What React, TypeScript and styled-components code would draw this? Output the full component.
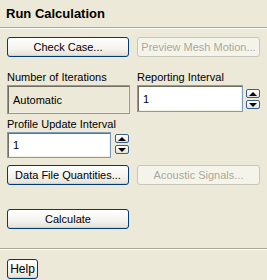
import styled, { createGlobalStyle } from "styled-components";

const GlobalStyle = createGlobalStyle`
  html, body {
    margin: 0;
    padding: 0;
    background: #ece9d8;
  }
  body {
    font-family: "Liberation Sans", Arial, sans-serif;
    font-size: 11px;
    color: #000;
  }
`;

const Panel = styled.div`
  width: 267px;
  height: 280px;
  display: flex;
  flex-direction: column;
  background: #ece9d8;
  overflow: hidden;
`;

const Header = styled.div`
  height: 27px;
  padding: 6px 0 0 6px;
  box-sizing: border-box;
  font-size: 13px;
  font-weight: bold;
  line-height: 16px;
`;

const Rule = styled.div`
  height: 1px;
  background: #aca899;
  border-bottom: 1px solid #fff;
`;

const Body = styled.div`
  flex: 1;
  padding: 8px 7px 0;
  display: flex;
  flex-direction: column;
`;

const Row = styled.div<{ $top?: number }>`
  display: grid;
  grid-template-columns: 122px 123px;
  column-gap: 8px;
  margin-top: ${(p) => p.$top ?? 0}px;
  align-items: start;
`;

const Button = styled.button`
  height: 20px;
  margin: 0;
  padding: 0;
  box-sizing: border-box;
  font: inherit;
  font-size: 11px;
  white-space: nowrap;
  color: #000;
  border: 1px solid #003c74;
  border-radius: 3px;
  background: linear-gradient(#ffffff 0%, #f4f3ee 60%, #e3e0d5 100%);
  box-shadow: inset 0 -1px 0 #d6d0c5;

  &:disabled {
    color: #aca899;
    border-color: #c9c7ba;
    background: #f5f4ea;
    box-shadow: none;
  }
`;

const Field = styled.div`
  display: flex;
  flex-direction: column;
`;

const Label = styled.div`
  height: 14px;
  line-height: 13px;
  white-space: nowrap;
`;

const InputRow = styled.div<{ $gap?: number }>`
  display: flex;
  align-items: flex-start;
  gap: ${(p) => p.$gap ?? 4}px;
`;

const TextBox = styled.div<{ $w: number; $h: number; $disabled?: boolean }>`
  width: ${(p) => p.$w}px;
  height: ${(p) => p.$h}px;
  box-sizing: border-box;
  border: 1px solid #7f9db9;
  box-shadow: inset 1px 1px 0 #716f64, inset -1px -1px 0 #f1efe2;
  background: ${(p) => (p.$disabled ? "#ece9d8" : "#fff")};
  padding-left: 5px;
  display: flex;
  align-items: center;
  font-size: 11px;
`;

const Spin = styled.div<{ $mt: number }>`
  display: flex;
  flex-direction: column;
  gap: 2px;
  margin-top: ${(p) => p.$mt}px;
`;

const SpinButton = styled.div<{ $down?: boolean }>`
  width: 14px;
  height: 9px;
  box-sizing: border-box;
  border: 1px solid #3a5f8a;
  border-radius: 2px;
  background: linear-gradient(#ffffff, #e6e2d6);
  display: flex;
  align-items: center;
  justify-content: center;

  &::after {
    content: "";
    width: 0;
    height: 0;
    border-left: 4px solid transparent;
    border-right: 4px solid transparent;
    ${(p) =>
      p.$down ? "border-top: 4px solid #000;" : "border-bottom: 4px solid #000;"}
  }
`;

const Footer = styled.div`
  padding: 9px 7px 0;
  height: 30px;
  box-sizing: border-box;
`;

const HelpButton = styled(Button)`
  width: 31px;
  font-size: 12px;
`;

const Spinner = ({ mt }: { mt: number }) => (
  <Spin $mt={mt}>
    <SpinButton />
    <SpinButton $down />
  </Spin>
);

export default function App() {
  return (
    <>
      <GlobalStyle />
      <Panel>
        <Header>Run Calculation</Header>
        <Rule />
        <Body>
          <Row>
            <Button>Check Case...</Button>
            <Button disabled>Preview Mesh Motion...</Button>
          </Row>

          <Row $top={14}>
            <Field>
              <Label>Number of Iterations</Label>
              <TextBox $w={123} $h={29} $disabled>
                Automatic
              </TextBox>
            </Field>
            <Field>
              <Label>Reporting Interval</Label>
              <InputRow $gap={3}>
                <TextBox $w={108} $h={27}>
                  1
                </TextBox>
                <Spinner mt={4} />
              </InputRow>
            </Field>
          </Row>

          <Row $top={4}>
            <Field>
              <Label>Profile Update Interval</Label>
              <InputRow $gap={4}>
                <TextBox $w={106} $h={26}>
                  1
                </TextBox>
                <Spinner mt={2} />
              </InputRow>
            </Field>
          </Row>

          <Row $top={7}>
            <Button>Data File Quantities...</Button>
            <Button disabled>Acoustic Signals...</Button>
          </Row>

          <Row $top={24}>
            <Button>Calculate</Button>
          </Row>
        </Body>
        <Rule />
        <Footer>
          <HelpButton>Help</HelpButton>
        </Footer>
      </Panel>
    </>
  );
}
